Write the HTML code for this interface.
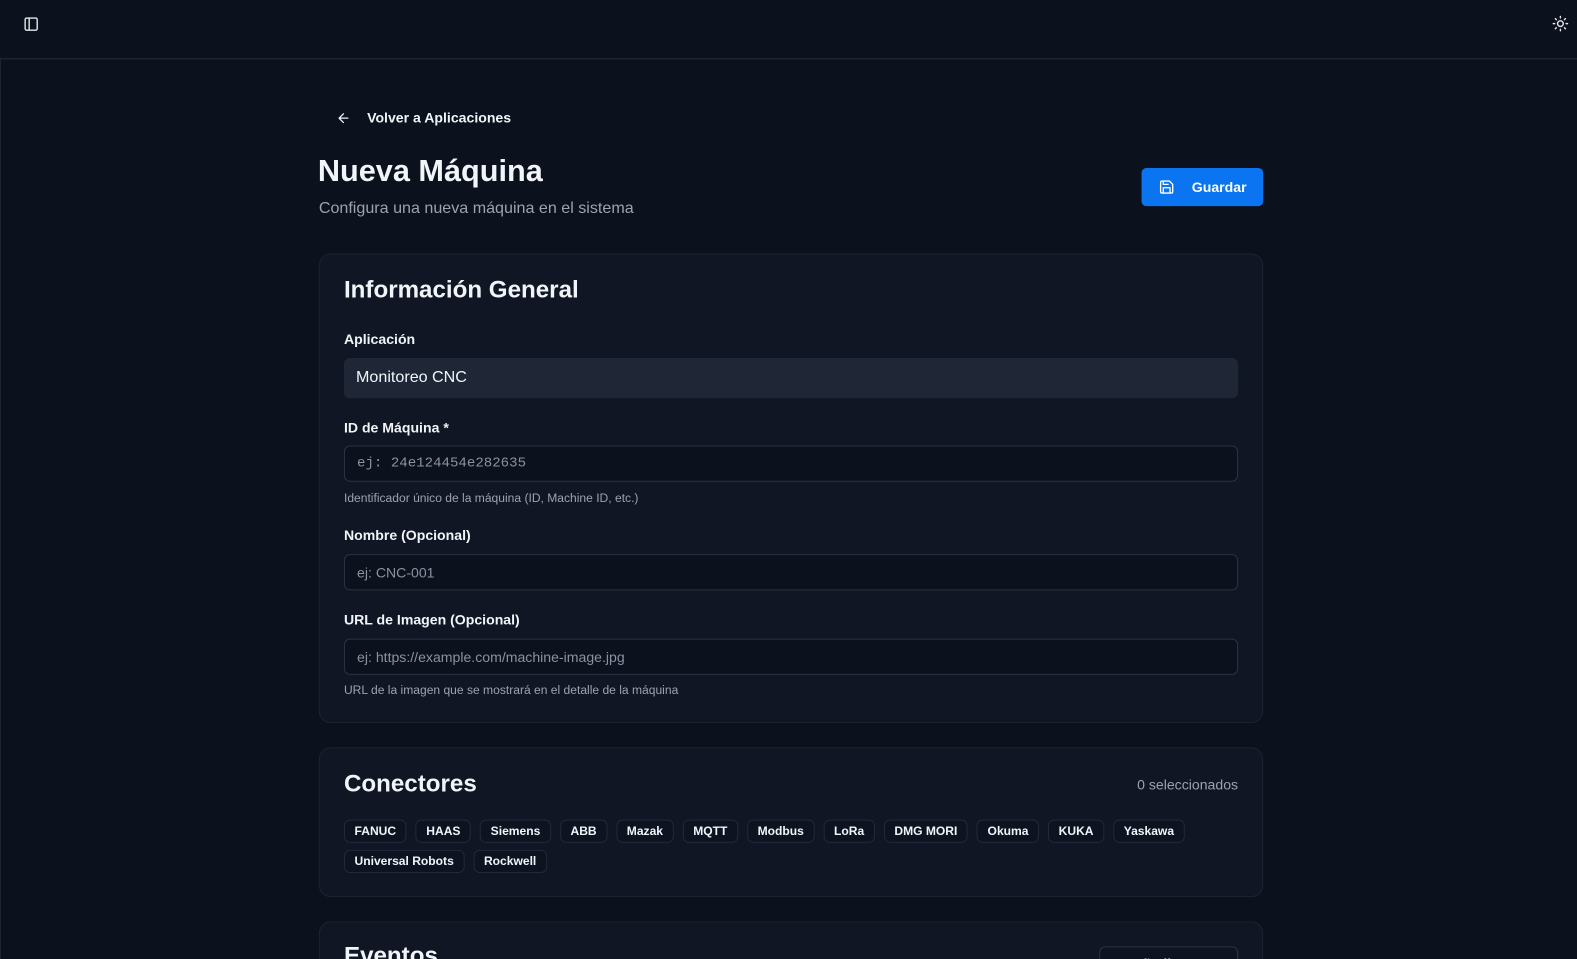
<!DOCTYPE html>
<html><head><meta charset="utf-8"><style>
*{box-sizing:border-box;margin:0;padding:0}
html{width:1577px;height:959px;overflow:hidden}
body{width:1577px;height:959px;overflow:hidden;background:#0b111d;font-family:"Liberation Sans",sans-serif;color:#f1f5f9;position:relative}
#w{position:absolute;left:0;top:0;width:1568px;height:954px;transform:scale(1.00574);transform-origin:0 0}
.top{position:absolute;left:0;top:0;width:1577px;height:59px;border-bottom:1px solid #262d3a}
.abs{position:absolute}
.card{position:absolute;left:317px;width:939px;background:#101624;border:1px solid #1c2331;border-radius:12px}
.lbl{position:absolute;left:342px;font-size:14px;font-weight:bold;color:#f1f5f9}
.inp{position:absolute;left:342px;width:889px;height:36px;border:1px solid #2a3343;border-radius:6px;background:#0b111d;color:#8a93a3;font-size:14px;padding-left:12px;line-height:34px}
.help{position:absolute;left:342px;font-size:12px;color:#9aa3b2}
.chips{position:absolute;left:342px;top:815px;width:860px;display:flex;flex-wrap:wrap;gap:7px 9px}
.chip{height:23px;padding:0 9.5px;border:1px solid #222a38;border-radius:6px;font-size:12px;font-weight:bold;line-height:21px;color:#f1f5f9;background:#0d1320}
</style></head><body><div id="w">
<div class="top"></div>
<div class="abs" style="left:0;top:59px;width:1px;height:900px;background:#1c2331"></div>
<svg class="abs" style="left:23px;top:16px" width="16" height="16" viewBox="0 0 16 16" fill="none" stroke="#e5e7eb" stroke-width="1.4"><rect x="2" y="2" width="12" height="12" rx="1.5"/><line x1="6" y1="2" x2="6" y2="14"/></svg>
<svg class="abs" style="left:1543px;top:15px" width="17" height="17" viewBox="0 0 24 24" fill="none" stroke="#e5e7eb" stroke-width="2" stroke-linecap="round"><circle cx="12" cy="12" r="4"/><path d="M12 2v2M12 20v2M4.9 4.9l1.4 1.4M17.7 17.7l1.4 1.4M2 12h2M20 12h2M6.3 17.7l-1.4 1.4M19.1 4.9l-1.4 1.4"/></svg>

<svg class="abs" style="left:334px;top:110px" width="15" height="15" viewBox="0 0 24 24" fill="none" stroke="#f1f5f9" stroke-width="2" stroke-linecap="round" stroke-linejoin="round"><path d="M19 12H5M12 19l-7-7 7-7"/></svg>
<div class="abs" style="left:365px;top:109px;font-size:14px;font-weight:bold">Volver a Aplicaciones</div>
<div class="abs" style="left:316px;top:153px;font-size:30.5px;font-weight:bold">Nueva Máquina</div>
<div class="abs" style="left:317px;top:199px;font-size:16px;color:#9aa3b2">Configura una nueva máquina en el sistema</div>
<div class="abs" style="left:1135px;top:167px;width:121px;height:38px;background:#0b74f0;border-radius:5px"></div>
<svg class="abs" style="left:1152px;top:178px" width="16" height="16" viewBox="0 0 24 24" fill="none" stroke="#fff" stroke-width="2" stroke-linejoin="round"><path d="M5 3h11l5 5v11a2 2 0 0 1-2 2H5a2 2 0 0 1-2-2V5a2 2 0 0 1 2-2z"/><path d="M17 21v-8H7v8M7 3v5h8"/></svg>
<div class="abs" style="left:1185px;top:178px;font-size:14px;font-weight:bold;color:#fff">Guardar</div>

<div class="card" style="top:252px;height:467px"></div>
<div class="abs" style="left:342px;top:275px;font-size:24px;font-weight:bold">Información General</div>
<div class="lbl" style="top:329px">Aplicación</div>
<div class="inp" style="top:356px;height:40px;line-height:40px;background:#1f2737;border:none;color:#f1f5f9;font-size:16px">Monitoreo CNC</div>
<div class="lbl" style="top:417px">ID de Máquina *</div>
<div class="inp" style="top:443px;font-family:'Liberation Mono',monospace;font-size:14px">ej: 24e124454e282635</div>
<div class="help" style="top:488px">Identificador único de la máquina (ID, Machine ID, etc.)</div>
<div class="lbl" style="top:524px">Nombre (Opcional)</div>
<div class="inp" style="top:551px">ej: CNC-001</div>
<div class="lbl" style="top:608px">URL de Imagen (Opcional)</div>
<div class="inp" style="top:635px">ej: https://example.com/machine-image.jpg</div>
<div class="help" style="top:679px">URL de la imagen que se mostrará en el detalle de la máquina</div>

<div class="card" style="top:743px;height:149px"></div>
<div class="abs" style="left:342px;top:766px;font-size:24px;font-weight:bold">Conectores</div>
<div class="abs" style="right:337px;top:772px;font-size:14px;color:#9aa3b2">0 seleccionados</div>
<div class="chips">
<span class="chip">FANUC</span><span class="chip">HAAS</span><span class="chip">Siemens</span><span class="chip">ABB</span><span class="chip">Mazak</span><span class="chip">MQTT</span><span class="chip">Modbus</span><span class="chip">LoRa</span><span class="chip">DMG MORI</span><span class="chip">Okuma</span><span class="chip">KUKA</span><span class="chip">Yaskawa</span><span class="chip">Universal Robots</span><span class="chip">Rockwell</span>
</div>

<div class="card" style="top:916px;height:60px;border-bottom:none;border-radius:12px 12px 0 0"></div>
<div class="abs" style="left:342px;top:937px;font-size:24px;font-weight:bold">Eventos</div>
<div class="abs" style="left:1093px;top:941px;width:138px;height:36px;border:1px solid #2a3343;border-radius:6px;background:#0d1320;font-size:14px;font-weight:bold;padding:8px 0 0 20px">+ Añadir Evento</div>
</div></body></html>
